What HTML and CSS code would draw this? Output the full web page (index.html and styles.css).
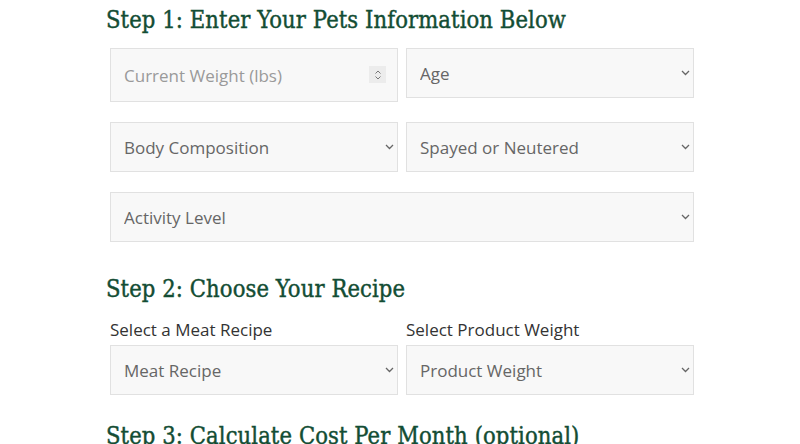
FILE: index.html
```html
<!DOCTYPE html>
<html lang="en">
<head>
    <meta charset="UTF-8">
    <meta name="viewport" content="width=device-width, initial-scale=1.0">
    <title>Raw Food Calculator</title>
    <link rel="stylesheet" href="styles.css">
</head>
<body>

<div id="calculator">
    <h2 class="step-title">Step 1: Enter Your Pets Information Below</h2>
    <div class="field-grid">
        <div class="field field-tall">
            <input type="text" class="calc-input" placeholder="Current Weight (lbs)">
            <span class="spinner">
                <svg width="8" height="12" viewBox="0 0 8 12"><path d="M1.5 4.5 L4 2 L6.5 4.5 M1.5 7.5 L4 10 L6.5 7.5" fill="none" stroke="#777" stroke-width="1"/></svg>
            </span>
        </div>
        <div class="field">
            <select class="calc-select"><option>Age</option></select>
            <svg class="chevron" width="9" height="6" viewBox="0 0 9 6"><path d="M1 1 L4.5 4.5 L8 1" fill="none" stroke="#666" stroke-width="1.3"/></svg>
        </div>
        <div class="field">
            <select class="calc-select"><option>Body Composition</option></select>
            <svg class="chevron" width="9" height="6" viewBox="0 0 9 6"><path d="M1 1 L4.5 4.5 L8 1" fill="none" stroke="#666" stroke-width="1.3"/></svg>
        </div>
        <div class="field">
            <select class="calc-select"><option>Spayed or Neutered</option></select>
            <svg class="chevron" width="9" height="6" viewBox="0 0 9 6"><path d="M1 1 L4.5 4.5 L8 1" fill="none" stroke="#666" stroke-width="1.3"/></svg>
        </div>
        <div class="field field-wide">
            <select class="calc-select"><option>Activity Level</option></select>
            <svg class="chevron" width="9" height="6" viewBox="0 0 9 6"><path d="M1 1 L4.5 4.5 L8 1" fill="none" stroke="#666" stroke-width="1.3"/></svg>
        </div>
    </div>

    <h2 class="step-title step-two">Step 2: Choose Your Recipe</h2>
    <div class="field-grid">
        <div>
            <label class="field-label">Select a Meat Recipe</label>
            <div class="field">
                <select class="calc-select"><option>Meat Recipe</option></select>
                <svg class="chevron" width="9" height="6" viewBox="0 0 9 6"><path d="M1 1 L4.5 4.5 L8 1" fill="none" stroke="#666" stroke-width="1.3"/></svg>
            </div>
        </div>
        <div>
            <label class="field-label">Select Product Weight</label>
            <div class="field">
                <select class="calc-select"><option>Product Weight</option></select>
                <svg class="chevron" width="9" height="6" viewBox="0 0 9 6"><path d="M1 1 L4.5 4.5 L8 1" fill="none" stroke="#666" stroke-width="1.3"/></svg>
            </div>
        </div>
    </div>

    <h2 class="step-title step-three">Step 3: Calculate Cost Per Month (optional)</h2>
</div>

</body>
</html>
```

FILE: styles.css
```css
body {
    margin: 0;
    padding: 0;
    background-color: #fff;
    font-family: 'Open Sans', 'Noto Sans', sans-serif;
    color: #555;
}

#calculator {
    width: 588px;
    margin-left: 106px;
    padding-top: 4px;
}

.step-title {
    font-family: 'DejaVu Serif', 'Liberation Serif', serif;
    font-stretch: condensed;
    font-weight: normal;
    font-size: 23.5px;
    line-height: 32px;
    color: #134d34;
    -webkit-text-stroke: 0.4px #134d34;
    margin: 0 0 12px 0;
    letter-spacing: 0.1px;
}

.step-two {
    margin-top: 31px;
    margin-bottom: 13px;
}

.step-three {
    margin-top: 25px;
}

.field-grid {
    display: grid;
    grid-template-columns: 288px 288px;
    column-gap: 8px;
    row-gap: 20px;
    padding-left: 4px;
}

.field {
    position: relative;
    height: 50px;
}

.field-tall {
    height: 54px;
}

.field-wide {
    grid-column: span 2;
}

.calc-input, .calc-select {
    width: 100%;
    height: 100%;
    box-sizing: border-box;
    padding: 0 13px;
    border: 1px solid #e1e1e1;
    background-color: #f8f8f8;
    font-family: 'Open Sans', 'Noto Sans', sans-serif;
    font-size: 17px;
    color: #666;
    border-radius: 0;
    appearance: none;
    -webkit-appearance: none;
    outline: none;
}

.calc-input::placeholder {
    color: #9a9a9a;
}

.chevron {
    position: absolute;
    right: 4px;
    top: 22px;
}

.spinner {
    position: absolute;
    right: 12px;
    top: 18px;
    width: 17px;
    height: 17px;
    background-color: #ececec;
    display: flex;
    align-items: center;
    justify-content: center;
}

.field-label {
    display: block;
    font-size: 17px;
    line-height: 24px;
    color: #333;
    margin-bottom: 3px;
}
```
